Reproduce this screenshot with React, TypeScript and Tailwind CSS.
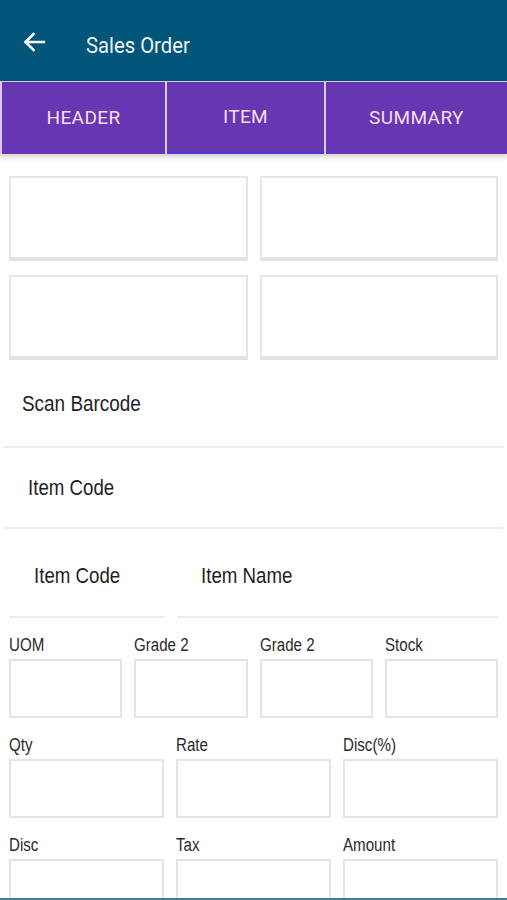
import React from "react";

const sans = "font-['Liberation_Sans',Arial,sans-serif]";

// text in the shot is horizontally condensed
function Txt({ children, className = "" }: { children: React.ReactNode; className?: string }) {
  return <span className={`inline-block origin-left whitespace-nowrap ${className}`}>{children}</span>;
}

function Box({ className = "" }: { className?: string }) {
  return <div className={`border-2 border-[#e4e4e4] bg-white ${className}`} />;
}

function Field({ label }: { label: string }) {
  return (
    <div className="flex flex-col">
      <span className="mt-[17px] mb-[3px] text-[18px] leading-[21px] text-[#2b2b2b]">
        <Txt className="scale-x-[0.84]">{label}</Txt>
      </span>
      <Box className="h-[59px]" />
    </div>
  );
}

export default function App() {
  const tabs = [
    { name: "HEADER", w: "w-[163px]" },
    { name: "ITEM", w: "w-[157px]", active: true },
    { name: "SUMMARY", w: "flex-1" },
  ];

  return (
    <div className={`w-[507px] h-[900px] overflow-hidden bg-white border-b-[2px] border-[#3d7f98] ${sans}`}>
      {/* TOP BAR */}
      <div className="h-[81px] bg-[#03557a] flex items-center font-['Roboto',sans-serif]">
        <svg width="22" height="20" viewBox="0 0 22 20" className="ml-[23px] mt-[2px]">
          <path d="M21 10H2.5M10.5 2 2.5 10l8 8" fill="none" stroke="#fff" strokeWidth="2.6" strokeLinecap="square" />
        </svg>
        <span className="ml-[41px] mt-[9px] text-[22px] text-[#eef4f7]">
          <Txt className="scale-x-[0.92]">Sales Order</Txt>
        </span>
      </div>

      {/* TABS */}
      <div className="relative z-10 flex gap-[2px] bg-[#d8c9ee] pt-[1px] pl-[2px] shadow-[0_3px_5px_rgba(0,0,0,0.18)] font-['Roboto',sans-serif]">
        {tabs.map((t) => (
          <div
            key={t.name}
            className={`${t.w} h-[72px] bg-[#6736b2] flex items-center justify-center text-[19px] tracking-[0.4px] text-[#f6dff1] ${
              t.active ? "border-b-[2px] border-[#4538d6]" : ""
            }`}
          >
            {t.name}
          </div>
        ))}
      </div>

      {/* BOX GRID */}
      <div className="grid grid-cols-2 gap-x-[12px] gap-y-[14px] px-[9px] pt-[22px]">
        {[0, 1, 2, 3].map((i) => (
          <div key={i} className="h-[85px] border-2 border-[#e6e6e6] border-b-[4px] border-b-[#e2e2e2]" />
        ))}
      </div>

      {/* SCAN BARCODE */}
      <div className="mx-[3px] h-[88px] flex items-center pl-[19px] border-b-2 border-[#ececec] text-[22px] text-[#1f1f1f]">
        <Txt className="scale-x-[0.86]">Scan Barcode</Txt>
      </div>

      {/* ITEM CODE */}
      <div className="mx-[4px] h-[81px] flex items-center pl-[24px] border-b-2 border-[#ececec] text-[22px] text-[#1f1f1f]">
        <Txt className="scale-x-[0.85]">Item Code</Txt>
      </div>

      {/* ITEM CODE / NAME */}
      <div className="flex gap-[12px] px-[9px] text-[22px] text-[#1f1f1f]">
        <div className="w-[156px] h-[89px] pt-[6px] flex items-center pl-[25px] border-b-2 border-[#ececec]">
          <Txt className="scale-x-[0.85]">Item Code</Txt>
        </div>
        <div className="flex-1 h-[89px] pt-[6px] flex items-center pl-[24px] border-b-2 border-[#ececec]">
          <Txt className="scale-x-[0.85]">Item Name</Txt>
        </div>
      </div>

      {/* UOM ROW */}
      <div className="grid grid-cols-4 gap-x-[12px] px-[9px]">
        {["UOM", "Grade 2", "Grade 2", "Stock"].map((l, i) => (
          <Field key={i} label={l} />
        ))}
      </div>

      {/* QTY ROW */}
      <div className="grid grid-cols-3 gap-x-[12px] px-[9px]">
        {["Qty", "Rate", "Disc(%)"].map((l) => (
          <Field key={l} label={l} />
        ))}
      </div>

      {/* DISC ROW */}
      <div className="grid grid-cols-3 gap-x-[12px] px-[9px]">
        {["Disc", "Tax", "Amount"].map((l) => (
          <Field key={l} label={l} />
        ))}
      </div>
    </div>
  );
}
